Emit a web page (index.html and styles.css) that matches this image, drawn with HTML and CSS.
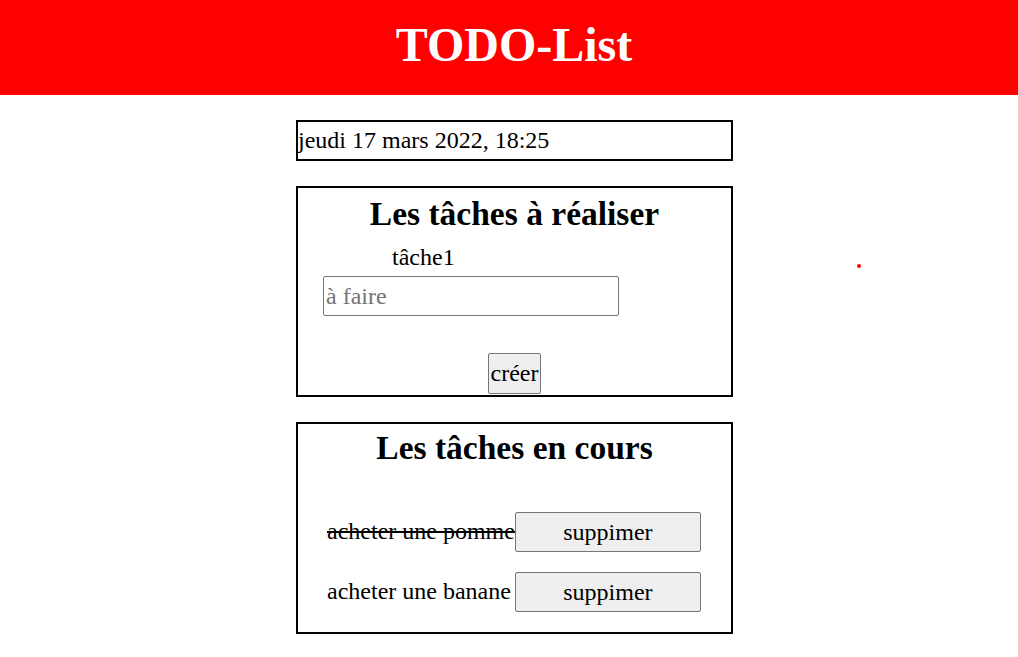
FILE: index.html
```html
<!DOCTYPE html>
<html lang="fr">
<head>
<meta charset="utf-8">
<title>TODO-List</title>
<link rel="stylesheet" href="styles.css">
</head>
<body>
<header class="header">
  <h1 class="header-title">TODO-List</h1>
</header>
<main class="main">
  <div class="date-box">jeudi 17 mars 2022, 18:25</div>

  <section class="card card-create">
    <h2 class="card-title">Les tâches à réaliser</h2>
    <label class="task-label" for="task">tâche1</label>
    <input class="task-input" id="task" type="text" placeholder="à faire">
    <button class="btn-create" type="button">créer</button>
  </section>

  <section class="card card-list">
    <h2 class="card-title card-title-list">Les tâches en cours</h2>
    <div class="task-grid">
      <span class="task-text done">acheter une pomme</span>
      <button class="btn-delete" type="button">suppimer</button>
      <span class="task-text">acheter une banane</span>
      <button class="btn-delete" type="button">suppimer</button>
    </div>
  </section>
</main>
<span class="dot"></span>
</body>
</html>
```

FILE: styles.css
```css
html, body {
  margin: 0;
  padding: 0;
  background: #ffffff;
}

body {
  font-family: "Liberation Serif", "Times New Roman", serif;
  font-size: 24px;
  color: #000000;
  position: relative;
  min-height: 657px;
}

.header {
  background: #ff0000;
  height: 95px;
  box-sizing: border-box;
  padding: 18px 0 0 10px;
}

.header-title {
  margin: 0;
  text-align: center;
  color: #ffffff;
  font-size: 48px;
  line-height: 53px;
  font-weight: bold;
}

.main {
  padding-left: 11px;
  display: flex;
  flex-direction: column;
  align-items: center;
}

.date-box {
  width: 433px;
  margin-top: 25px;
  border: 2px solid #000000;
  padding: 4px 0 5px 0;
  line-height: 28px;
  white-space: nowrap;
}

.card {
  width: 433px;
  border: 2px solid #000000;
  margin-top: 25px;
  display: flex;
  flex-direction: column;
}

.card-title {
  margin: 7px 0 0 0;
  font-size: 33.5px;
  line-height: 38px;
  font-weight: bold;
  text-align: center;
}

.card-title-list {
  margin-top: 5px;
}

.task-label {
  margin: 10px 0 0 94px;
  line-height: 28px;
}

.task-input {
  margin: 5px 0 0 25px;
  width: 296px;
  height: 40px;
  box-sizing: border-box;
  border: 1px solid #767676;
  border-radius: 2px;
  padding: 0 2px;
  font-family: inherit;
  font-size: 24px;
  color: #000000;
  background: #ffffff;
}

.task-input::placeholder {
  color: #757575;
}

.btn-create {
  align-self: center;
  margin: 37px 0 1px 0;
  height: 41px;
  padding: 0 2px;
  box-sizing: border-box;
  border: 1px solid #767676;
  border-radius: 2px;
  background: #efefef;
  font-family: inherit;
  font-size: 24px;
  color: #000000;
}

.task-grid {
  display: grid;
  grid-template-columns: auto auto;
  justify-content: start;
  align-items: center;
  row-gap: 20px;
  margin: 45px 0 20px 29px;
}

.task-text {
  line-height: 28px;
  white-space: nowrap;
  margin-top: -2px;
}

.done {
  text-decoration: line-through;
}

.btn-delete {
  width: 186px;
  height: 40px;
  box-sizing: border-box;
  border: 1px solid #767676;
  border-radius: 2px;
  background: #efefef;
  font-family: inherit;
  font-size: 24px;
  color: #000000;
  padding: 0;
}

.dot {
  position: absolute;
  left: 857px;
  top: 264px;
  width: 4px;
  height: 4px;
  border-radius: 50%;
  background: #ff0000;
}
```
